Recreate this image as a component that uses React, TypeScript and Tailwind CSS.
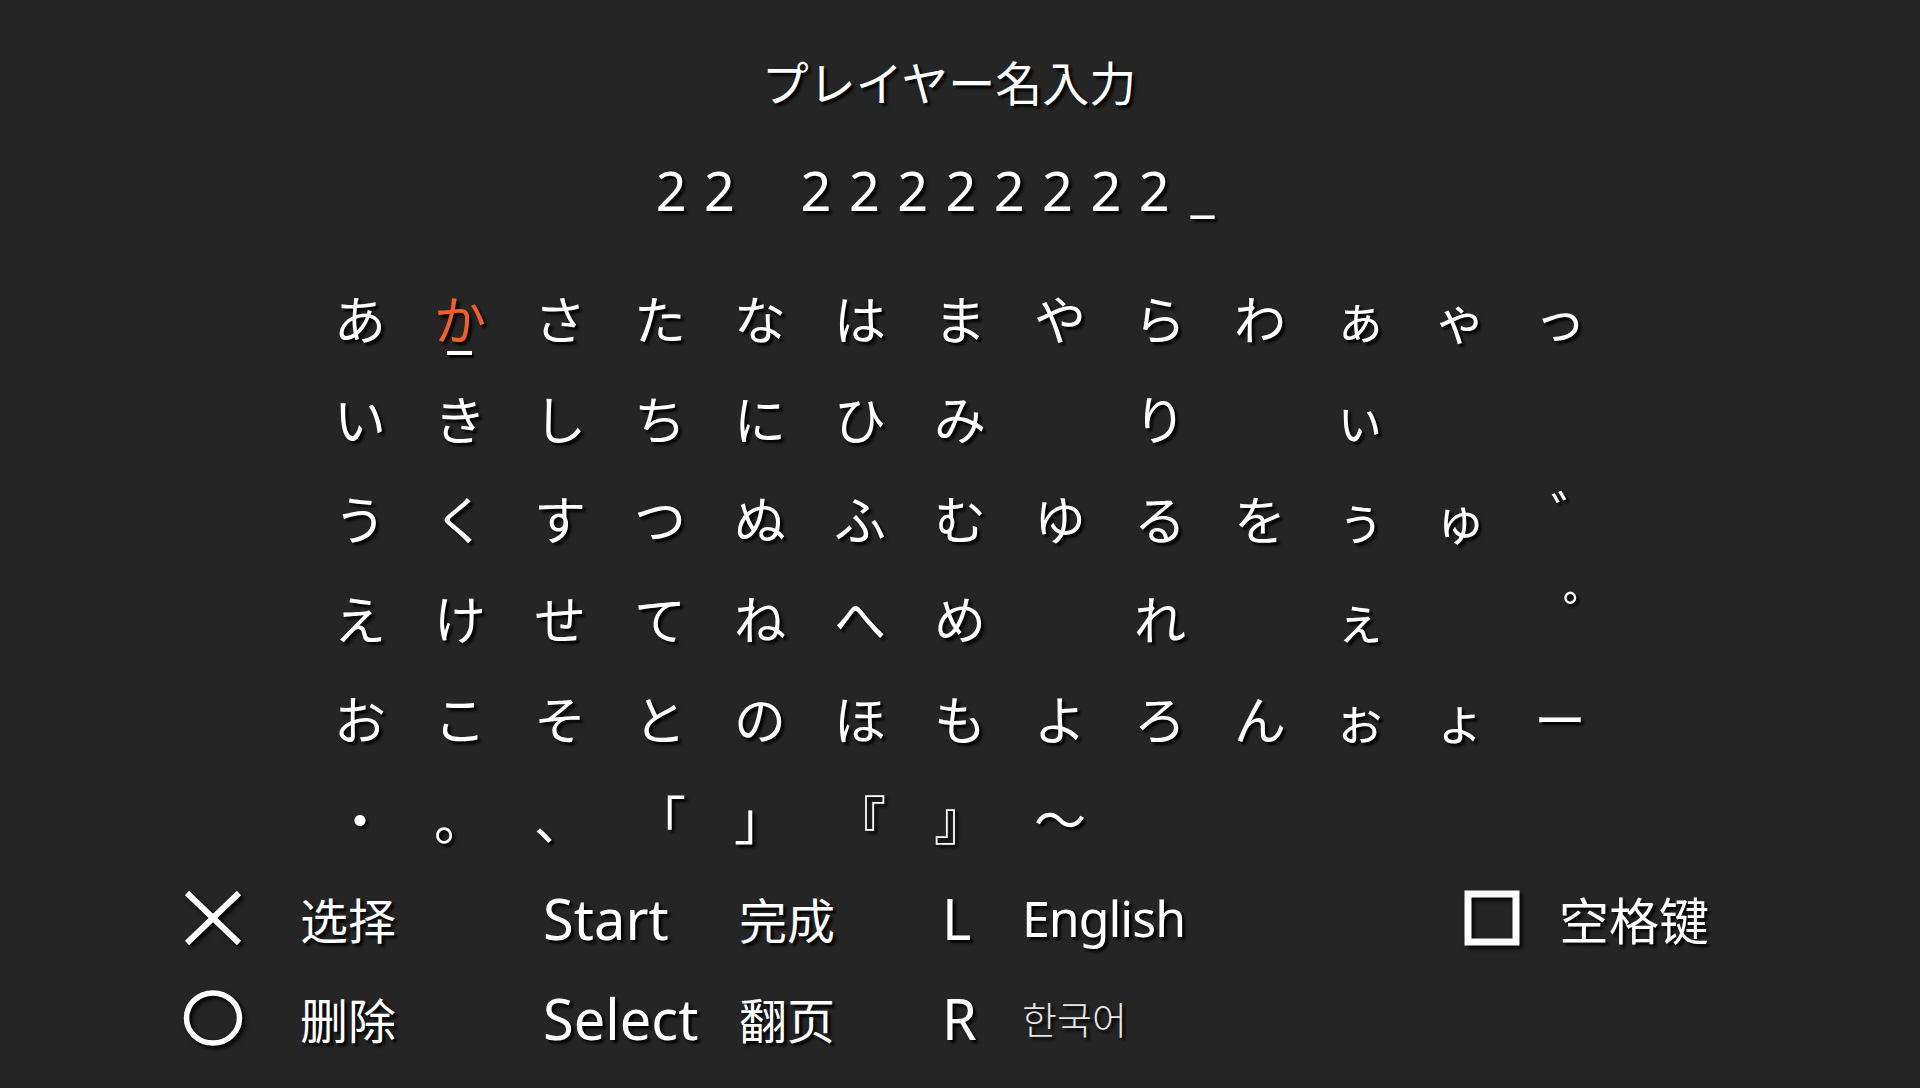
const JP = { fontFamily: '"Noto Sans CJK JP", "Noto Sans", sans-serif' };

const ROWS = [
  ["あ", "か", "さ", "た", "な", "は", "ま", "や", "ら", "わ", "ぁ", "ゃ", "っ"],
  ["い", "き", "し", "ち", "に", "ひ", "み", "", "り", "", "ぃ", "", ""],
  ["う", "く", "す", "つ", "ぬ", "ふ", "む", "ゆ", "る", "を", "ぅ", "ゅ", "゛"],
  ["え", "け", "せ", "て", "ね", "へ", "め", "", "れ", "", "ぇ", "", "゜"],
  ["お", "こ", "そ", "と", "の", "ほ", "も", "よ", "ろ", "ん", "ぉ", "ょ", "ー"],
  ["・", "。", "、", "「", "」", "『", "』", "〜", "", "", "", "", ""],
];

const NAME = ["2", "2", "", "2", "2", "2", "2", "2", "2", "2", "2", "_"];

const shadow = "[text-shadow:3px_3px_3px_rgba(0,0,0,0.95)]";

function Cross() {
  return (
    <svg width="60" height="56" viewBox="0 0 60 56" className="[filter:drop-shadow(3px_3px_2px_rgba(0,0,0,0.9))]">
      <path d="M4 3 L56 53 M56 3 L4 53" stroke="white" strokeWidth="6" fill="none" />
    </svg>
  );
}

function Circle() {
  return (
    <svg width="60" height="56" viewBox="0 0 60 56" className="[filter:drop-shadow(3px_3px_2px_rgba(0,0,0,0.9))]">
      <ellipse cx="30" cy="28" rx="26.5" ry="25" stroke="white" strokeWidth="5.5" fill="none" />
    </svg>
  );
}

function Square() {
  return (
    <svg width="56" height="56" viewBox="0 0 56 56" className="[filter:drop-shadow(3px_3px_2px_rgba(0,0,0,0.9))]">
      <rect x="4" y="4" width="48" height="48" stroke="white" strokeWidth="7" fill="none" />
    </svg>
  );
}

// the loose voicing marks sit further right in the reference font
function markShift(c: string) {
  if (c === "゛") return "translate-x-[17px] -translate-y-[5px]";
  if (c === "゜") return "translate-x-[29px] -translate-y-[5px]";
  return "";
}

export default function App() {
  const latin = "font-['Noto_Sans',sans-serif] text-[56px] leading-none text-white " + shadow;
  const zh = "font-['Noto_Sans_CJK_SC',sans-serif] text-[48px] leading-none text-white " + shadow;
  return (
    <div className="w-full h-[1088px] bg-[#252525] overflow-hidden flex flex-col select-none">
      {/* title */}
      <div className="pt-[57px] flex justify-center pr-[22px]">
        <div style={JP} className={"text-[47px] leading-none text-white " + shadow}>
          プレイヤー名入力
        </div>
      </div>

      {/* name entry */}
      <div className="mt-[59px] ml-[647px] flex h-[54px]">
        {NAME.map((c, i) => (
          <div
            key={i}
            className={"w-[48.3px] flex justify-center font-['Noto_Sans',sans-serif] text-[54px] leading-none text-white " + shadow}
          >
            {c}
          </div>
        ))}
      </div>

      {/* kana grid */}
      <div style={JP} className="mt-[51px] ml-[310px] grid grid-cols-[repeat(13,100px)] grid-rows-[repeat(6,100px)]">
        {ROWS.map((row, r) =>
          row.map((c, k) => {
            const active = r === 0 && k === 1;
            return (
              <div key={r + "-" + k} className="relative flex items-center justify-center">
                <span
                  className={
                    "text-[52px] leading-none " +
                    (active ? "text-[#f25f28] " : "text-white ") +
                    markShift(c) +
                    " " +
                    shadow
                  }
                >
                  {c}
                </span>
                {active && (
                  <div className="absolute left-[37px] top-[83px] w-[25px] h-[4px] bg-white shadow-[2px_3px_2px_rgba(0,0,0,0.9)]" />
                )}
              </div>
            );
          })
        )}
      </div>

      {/* legend */}
      <div className="ml-[183px] grid grid-cols-[117px_243px_196px_203px_80px_442px_95px_auto] grid-rows-[repeat(2,100px)] items-center">
        <Cross />
        <div className={zh}>选择</div>
        <div className={latin}>Start</div>
        <div className={zh}>完成</div>
        <div className={latin}>L</div>
        <div className={"font-['Noto_Sans',sans-serif] text-[50px] leading-none text-white tracking-[-1px] " + shadow}>English</div>
        <Square />
        <div className={"font-['Noto_Sans_CJK_SC',sans-serif] text-[50px] leading-none text-white " + shadow}>空格键</div>

        <Circle />
        <div className={zh}>删除</div>
        <div className={latin}>Select</div>
        <div className={zh}>翻页</div>
        <div className={latin}>R</div>
        <div className={"font-['Noto_Sans_CJK_KR',sans-serif] font-light text-[38px] leading-none text-[#e6e6e6] " + shadow}>한국어</div>
        <div />
        <div />
      </div>
    </div>
  );
}
